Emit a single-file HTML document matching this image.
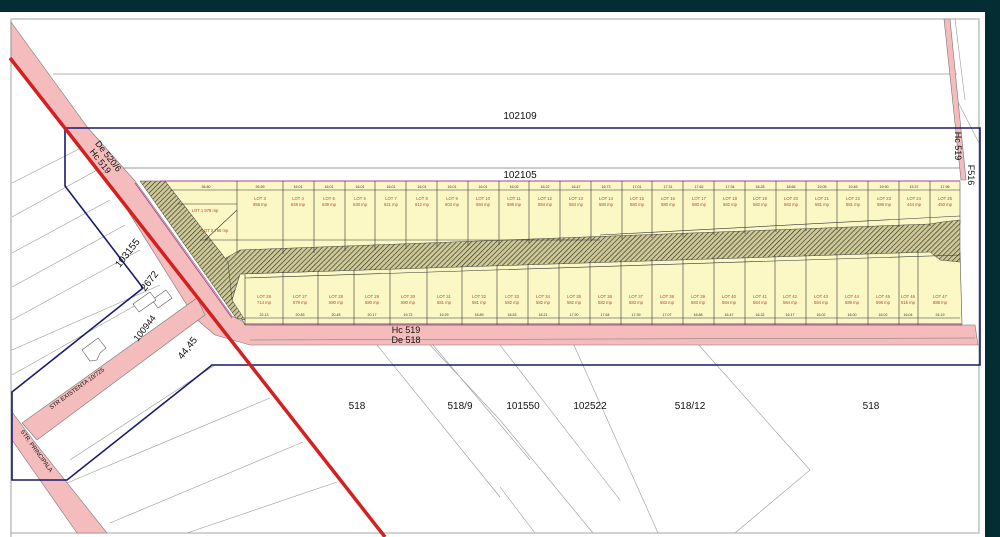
<!DOCTYPE html>
<html><head><meta charset="utf-8"><style>
html,body{margin:0;padding:0;background:#032d33;}
svg{display:block;font-family:"Liberation Sans",sans-serif;}
.t{font-size:3.6px;fill:#333}
.l{font-size:4.2px;fill:#b5462a}
.n{font-size:10px;fill:#111}
</style></head><body>
<svg width="1000" height="537" viewBox="0 0 1000 537" xmlns="http://www.w3.org/2000/svg">
<defs>
<pattern id="h" width="3.5" height="3.5" patternUnits="userSpaceOnUse" patternTransform="rotate(45)">
<rect width="4" height="4" fill="#cfc99a"/><line x1="0" y1="0" x2="0" y2="4" stroke="#3a3a24" stroke-width="1.4"/>
</pattern>
</defs>
<rect x="0" y="12" width="985" height="525" fill="#fff"/>
<polyline points="11,537 11,19 979,19 979,533 11,533" fill="none" stroke="#888" stroke-width="0.8"/>
<line x1="53" y1="74" x2="957" y2="74" stroke="#999" stroke-width="0.8"/>
<line x1="120" y1="168" x2="960" y2="168" stroke="#777" stroke-width="0.8"/>
<g stroke="#999" stroke-width="0.6" fill="none">
<line x1="12" y1="183" x2="83" y2="147"/><line x1="12" y1="217" x2="97" y2="170"/>
<line x1="12" y1="253" x2="110" y2="200"/><line x1="12" y1="287" x2="125" y2="225"/>
<line x1="12" y1="320" x2="140" y2="250"/><line x1="12" y1="350" x2="160" y2="285"/>
<line x1="12" y1="375" x2="145" y2="300"/>
<line x1="67" y1="483" x2="270" y2="398"/><line x1="110" y1="523" x2="303" y2="442"/>
<line x1="187" y1="533" x2="337" y2="482"/><line x1="70" y1="460" x2="215" y2="365"/>
<line x1="377" y1="345" x2="500" y2="497"/><line x1="433" y1="345" x2="530" y2="460"/>
<line x1="500" y1="345" x2="620" y2="500"/><line x1="573" y1="343" x2="658" y2="533"/>
<line x1="500" y1="420" x2="593" y2="533"/><line x1="500" y1="487" x2="535" y2="533"/>
<polyline points="697,343 810,470 735,533"/>
<line x1="430" y1="345" x2="500" y2="420"/>
<line x1="955" y1="19" x2="965" y2="100"/><line x1="957" y1="100" x2="980" y2="145"/>
</g>
<g fill="#f4bcbc" stroke="#777" stroke-width="0.6">
<polygon points="11,22 88,128 135,181 205,278 232,316 250,325 975,325 978,345 250,345 215,335 195,318 121,200 11,58"/>
<polygon points="22,423 197,298 205,315 37,440"/>
<polygon points="12,412 33,440 107,533 77,533 12,440"/>
<polygon points="944,19 950,19 966,180 961,180"/>
</g>
<line x1="250" y1="340" x2="975" y2="338" stroke="#777" stroke-width="0.5"/>
<polygon points="165,181 960,181 960,224 930,226 240,256 228,262" fill="#fbf8c6" stroke="#555" stroke-width="0.6"/>
<polygon points="240,274 930,250 960,252 962,325 245,325 232,300" fill="#fbf8c6" stroke="#555" stroke-width="0.6"/>
<polygon points="226,258 240,250 930,224 942,222 960,220 960,262 940,260 930,252 240,274 232,300 228,290" fill="url(#h)" stroke="#444" stroke-width="0.5"/>
<polygon points="140,181 165,181 228,262 232,300 245,320 236,318" fill="url(#h)" stroke="#444" stroke-width="0.5"/>
<line x1="160" y1="181" x2="960" y2="181" stroke="#a0409a" stroke-width="1"/>
<line x1="245" y1="324" x2="962" y2="324" stroke="#a0409a" stroke-width="1"/>
<line x1="135" y1="183" x2="232" y2="318" stroke="#a0409a" stroke-width="0.8"/>
<g stroke="#333" stroke-width="0.6">
<line x1="237" y1="181" x2="237" y2="253"/><line x1="283" y1="181" x2="283" y2="254"/>
<line x1="314" y1="181" x2="314" y2="253"/><line x1="345" y1="181" x2="345" y2="251"/>
<line x1="375" y1="181" x2="375" y2="250"/><line x1="406" y1="181" x2="406" y2="249"/>
<line x1="437" y1="181" x2="437" y2="247"/><line x1="468" y1="181" x2="468" y2="246"/>
<line x1="499" y1="181" x2="499" y2="245"/><line x1="529" y1="181" x2="529" y2="243"/>
<line x1="560" y1="181" x2="560" y2="242"/><line x1="591" y1="181" x2="591" y2="241"/>
<line x1="622" y1="181" x2="622" y2="239"/><line x1="652" y1="181" x2="652" y2="238"/>
<line x1="683" y1="181" x2="683" y2="237"/><line x1="714" y1="181" x2="714" y2="235"/>
<line x1="745" y1="181" x2="745" y2="234"/><line x1="776" y1="181" x2="776" y2="232"/>
<line x1="806" y1="181" x2="806" y2="231"/><line x1="837" y1="181" x2="837" y2="230"/>
<line x1="868" y1="181" x2="868" y2="228"/><line x1="899" y1="181" x2="899" y2="227"/>
<line x1="930" y1="181" x2="930" y2="226"/>
<line x1="170" y1="190" x2="960" y2="190"/>
<line x1="200" y1="240" x2="600" y2="240"/><line x1="600" y1="235" x2="960" y2="216"/>
<line x1="178" y1="204" x2="237" y2="204"/><line x1="237" y1="210" x2="205" y2="240"/>
<line x1="245" y1="274" x2="245" y2="325"/><line x1="283" y1="272" x2="283" y2="325"/>
<line x1="318" y1="271" x2="318" y2="325"/><line x1="354" y1="270" x2="354" y2="325"/>
<line x1="390" y1="269" x2="390" y2="325"/><line x1="427" y1="267" x2="427" y2="325"/>
<line x1="462" y1="266" x2="462" y2="325"/><line x1="497" y1="265" x2="497" y2="325"/>
<line x1="528" y1="264" x2="528" y2="325"/><line x1="559" y1="263" x2="559" y2="325"/>
<line x1="590" y1="262" x2="590" y2="325"/><line x1="621" y1="261" x2="621" y2="325"/>
<line x1="652" y1="260" x2="652" y2="325"/><line x1="683" y1="259" x2="683" y2="325"/>
<line x1="714" y1="258" x2="714" y2="325"/><line x1="745" y1="257" x2="745" y2="325"/>
<line x1="775" y1="256" x2="775" y2="325"/><line x1="806" y1="255" x2="806" y2="325"/>
<line x1="837" y1="254" x2="837" y2="325"/><line x1="868" y1="253" x2="868" y2="325"/>
<line x1="899" y1="252" x2="899" y2="325"/><line x1="918" y1="251" x2="918" y2="325"/>
<line x1="245" y1="318" x2="960" y2="318"/><line x1="245" y1="278" x2="960" y2="255"/>
</g>
<g class="l" text-anchor="middle">
<text x="205" y="212">LOT 1  978 mp</text><text x="215" y="232">LOT 2  766 mp</text>
<text x="260" y="200">LOT 3</text><text x="260" y="206">955 mp</text>
<text x="298" y="200">LOT 4</text><text x="298" y="206">648 mp</text>
<text x="329" y="200">LOT 5</text><text x="329" y="206">639 mp</text>
<text x="360" y="200">LOT 6</text><text x="360" y="206">630 mp</text>
<text x="391" y="200">LOT 7</text><text x="391" y="206">621 mp</text>
<text x="422" y="200">LOT 8</text><text x="422" y="206">612 mp</text>
<text x="452" y="200">LOT 9</text><text x="452" y="206">603 mp</text>
<text x="483" y="200">LOT 10</text><text x="483" y="206">594 mp</text>
<text x="514" y="200">LOT 11</text><text x="514" y="206">586 mp</text>
<text x="545" y="200">LOT 12</text><text x="545" y="206">584 mp</text>
<text x="576" y="200">LOT 13</text><text x="576" y="206">584 mp</text>
<text x="606" y="200">LOT 14</text><text x="606" y="206">580 mp</text>
<text x="637" y="200">LOT 15</text><text x="637" y="206">580 mp</text>
<text x="668" y="200">LOT 16</text><text x="668" y="206">580 mp</text>
<text x="699" y="200">LOT 17</text><text x="699" y="206">580 mp</text>
<text x="730" y="200">LOT 18</text><text x="730" y="206">582 mp</text>
<text x="760" y="200">LOT 19</text><text x="760" y="206">582 mp</text>
<text x="791" y="200">LOT 20</text><text x="791" y="206">582 mp</text>
<text x="822" y="200">LOT 21</text><text x="822" y="206">581 mp</text>
<text x="853" y="200">LOT 22</text><text x="853" y="206">581 mp</text>
<text x="884" y="200">LOT 23</text><text x="884" y="206">586 mp</text>
<text x="914" y="200">LOT 24</text><text x="914" y="206">444 mp</text>
<text x="945" y="200">LOT 25</text><text x="945" y="206">450 mp</text>
<text x="264" y="298">LOT 26</text><text x="264" y="304">714 mp</text>
<text x="300" y="298">LOT 27</text><text x="300" y="304">579 mp</text>
<text x="336" y="298">LOT 28</text><text x="336" y="304">580 mp</text>
<text x="372" y="298">LOT 29</text><text x="372" y="304">580 mp</text>
<text x="408" y="298">LOT 30</text><text x="408" y="304">580 mp</text>
<text x="444" y="298">LOT 31</text><text x="444" y="304">581 mp</text>
<text x="479" y="298">LOT 32</text><text x="479" y="304">581 mp</text>
<text x="512" y="298">LOT 33</text><text x="512" y="304">582 mp</text>
<text x="543" y="298">LOT 34</text><text x="543" y="304">582 mp</text>
<text x="574" y="298">LOT 35</text><text x="574" y="304">582 mp</text>
<text x="605" y="298">LOT 36</text><text x="605" y="304">582 mp</text>
<text x="636" y="298">LOT 37</text><text x="636" y="304">583 mp</text>
<text x="667" y="298">LOT 38</text><text x="667" y="304">583 mp</text>
<text x="698" y="298">LOT 39</text><text x="698" y="304">583 mp</text>
<text x="729" y="298">LOT 40</text><text x="729" y="304">584 mp</text>
<text x="760" y="298">LOT 41</text><text x="760" y="304">584 mp</text>
<text x="790" y="298">LOT 42</text><text x="790" y="304">584 mp</text>
<text x="821" y="298">LOT 43</text><text x="821" y="304">584 mp</text>
<text x="852" y="298">LOT 44</text><text x="852" y="304">589 mp</text>
<text x="883" y="298">LOT 45</text><text x="883" y="304">596 mp</text>
<text x="908" y="298">LOT 46</text><text x="908" y="304">616 mp</text>
<text x="940" y="298">LOT 47</text><text x="940" y="304">888 mp</text>
</g>
<g class="t" text-anchor="middle">
<text x="206" y="188">36.80</text><text x="260" y="188">26.59</text><text x="298" y="188">16.01</text><text x="329" y="188">16.01</text><text x="360" y="188">16.01</text><text x="391" y="188">16.01</text><text x="422" y="188">16.01</text><text x="452" y="188">16.01</text><text x="483" y="188">16.01</text><text x="514" y="188">16.02</text><text x="545" y="188">16.22</text><text x="576" y="188">16.47</text><text x="606" y="188">16.73</text><text x="637" y="188">17.01</text><text x="668" y="188">17.31</text><text x="699" y="188">17.62</text><text x="730" y="188">17.94</text><text x="760" y="188">18.28</text><text x="791" y="188">18.66</text><text x="822" y="188">19.05</text><text x="853" y="188">19.46</text><text x="884" y="188">19.90</text><text x="914" y="188">15.37</text><text x="945" y="188">17.96</text>
<text x="264" y="316">22.13</text><text x="300" y="316">20.83</text><text x="336" y="316">20.45</text><text x="372" y="316">20.17</text><text x="408" y="316">19.72</text><text x="444" y="316">19.29</text><text x="479" y="316">18.89</text><text x="512" y="316">18.53</text><text x="543" y="316">18.21</text><text x="574" y="316">17.90</text><text x="605" y="316">17.64</text><text x="636" y="316">17.39</text><text x="667" y="316">17.07</text><text x="698" y="316">16.88</text><text x="729" y="316">16.47</text><text x="760" y="316">16.32</text><text x="790" y="316">16.17</text><text x="821" y="316">16.02</text><text x="852" y="316">16.00</text><text x="883" y="316">16.02</text><text x="908" y="316">16.04</text><text x="940" y="316">24.19</text>
</g>
<g fill="none" stroke="#1a1a6e" stroke-width="1.6">
<polyline points="65,128 980,128 980,365 212,365 67,480 12,480 12,392 143,288 65,186 65,128"/>
</g>
<g fill="#fff" stroke="#555" stroke-width="0.6">
<polygon points="82,350 98,338 106,348 100,353 97,360 90,361"/>
<polygon points="152,300 166,290 172,298 158,308"/>
<polygon points="133,304 150,292 156,300 139,312"/>
</g>
<line x1="10" y1="58" x2="385" y2="537" stroke="#d42020" stroke-width="3.5"/>
<g class="n" text-anchor="middle">
<text x="520" y="119">102109</text>
<text x="520" y="178">102105</text>
<text x="357" y="409">518</text><text x="460" y="409">518/9</text>
<text x="523" y="409">101550</text><text x="590" y="409">102522</text>
<text x="690" y="409">518/12</text><text x="871" y="409">518</text>
<text x="0" y="0" transform="translate(130,255) rotate(-52)">103155</text>
<text x="0" y="0" transform="translate(152,283) rotate(-52)">2672</text>
<text x="0" y="0" transform="translate(147,330) rotate(-52)" font-size="9">100944</text>
<text x="0" y="0" transform="translate(190,350) rotate(-52)">44,45</text>
<text x="0" y="0" transform="translate(955,146) rotate(90)" font-size="9">Hc 519</text>
<text x="0" y="0" transform="translate(968,175) rotate(90)" font-size="9">F516</text>
<text x="0" y="0" transform="translate(106,158) rotate(52)" font-size="9">De 520/6</text>
<text x="0" y="0" transform="translate(98,163) rotate(52)" font-size="9">Hc 519</text>
<text x="406" y="333" font-size="9">Hc 519</text>
<text x="406" y="343" font-size="9">De 518</text>
<text x="0" y="0" transform="translate(78,390) rotate(-36)" font-size="6">STR EXISTENTA  10/725</text>
<text x="0" y="0" transform="translate(35,452) rotate(54)" font-size="6">STR. PRINCIPALA</text>
</g>
</svg>
</body></html>
